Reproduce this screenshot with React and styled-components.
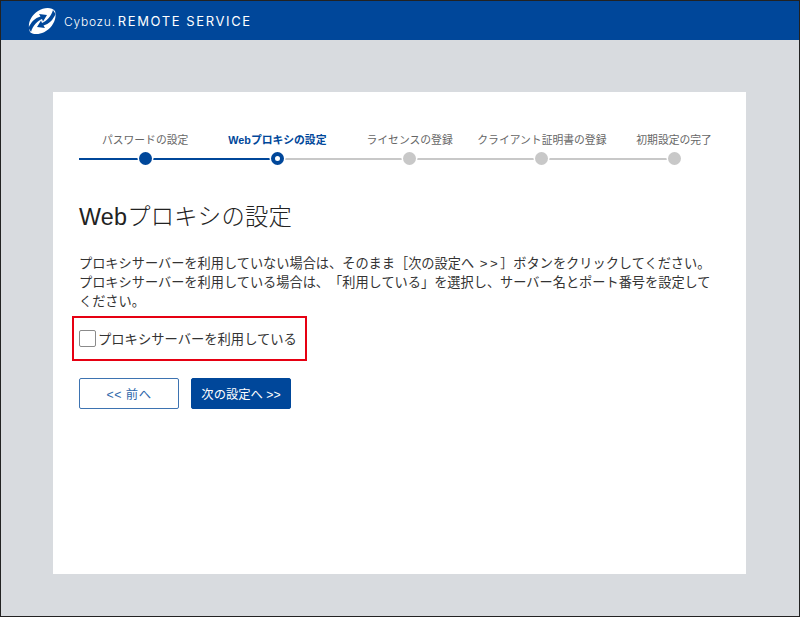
import styled, { createGlobalStyle } from 'styled-components'

const GlobalStyle = createGlobalStyle`
    html, body {
        margin: 0;
        padding: 0;
    }
    body {
        font-family: "Liberation Sans", "Noto Sans CJK JP", sans-serif;
        color: #333;
        text-spacing-trim: space-all;
    }
    * {
        box-sizing: border-box;
    }
`

const Page = styled.div`
    width: 800px;
    height: 617px;
    background-color: #d8dbdf;
    display: flex;
    flex-direction: column;
    overflow: hidden;
    border: 1px solid #222;
`

const Header = styled.header`
    height: 39px;
    flex: none;
    background-color: #00479a;
    display: flex;
    align-items: center;
    padding-left: 26px;
    gap: 7px;
`

const Brand = styled.div`
    display: flex;
    align-items: baseline;
    color: #fff;
    white-space: nowrap;
    font-family: "Inter", sans-serif;
`

const BrandName = styled.span`
    font-size: 12px;
    font-weight: 300;
    letter-spacing: 0.75px;
`

const BrandProduct = styled.span`
    font-size: 13px;
    font-weight: 400;
    letter-spacing: 1.6px;
    margin-left: 2px;
`

const Card = styled.main`
    width: 693px;
    height: 482px;
    margin: 52px 0 0 52px;
    background-color: #fff;
    padding: 40px 26px 0;
`

const Stepper = styled.ol`
    display: flex;
    list-style: none;
    margin: 0;
    padding: 0;
`

const Step = styled.li`
    width: 132.25px;
    display: flex;
    flex-direction: column;
    align-items: center;
    position: relative;
    flex: none;
    &::before,
    &::after {
        content: '';
        position: absolute;
        bottom: 5px;
        height: 2px;
        width: 50%;
    }
    &::before {
        left: 0;
        background-color: ${(p) => (p.$leftDone ? '#00479a' : '#c8c8c8')};
    }
    &::after {
        right: 0;
        background-color: ${(p) => (p.$last ? 'transparent' : p.$rightDone ? '#00479a' : '#c8c8c8')};
    }
`

const StepLabel = styled.span`
    font-size: 10.8px;
    line-height: 16px;
    white-space: nowrap;
    margin-bottom: 4px;
    color: ${(p) => (p.$current ? '#00479a' : '#666')};
    font-weight: ${(p) => (p.$current ? 700 : 400)};
`

const StepDot = styled.span`
    width: 13px;
    height: 13px;
    border-radius: 50%;
    position: relative;
    z-index: 1;
    background-color: ${(p) => (p.$current ? '#fff' : p.$done ? '#00479a' : '#c8c8c8')};
    border: ${(p) => (p.$current ? '4px solid #00479a' : 'none')};
    box-shadow: 0 0 0 1.5px #fff;
`

const Title = styled.h1`
    font-size: 23.3px;
    font-weight: 300;
    line-height: 28px;
    letter-spacing: 0.25px;
    margin: 38px 0 0;
    color: #222;
`

const Description = styled.p`
    font-size: 13.2px;
    line-height: 19px;
    word-spacing: 2px;
    margin: 23px 0 0;
    color: #333;
`

const Chevrons = styled.span`
    letter-spacing: 2.5px;
`

const OptionBox = styled.div`
    width: 235px;
    height: 45px;
    margin: 5px 0 0 -7px;
    border: 2px solid #e60012;
    display: flex;
    align-items: center;
    padding-left: 5px;
`

const OptionLabel = styled.label`
    display: flex;
    align-items: center;
    gap: 2px;
    font-size: 13.3px;
    white-space: nowrap;
    color: #333;
`

const CheckBox = styled.span`
    width: 17px;
    height: 17px;
    border: 1px solid #8a8a8a;
    border-radius: 2px;
    background-color: #fff;
`

const Actions = styled.div`
    display: flex;
    gap: 12px;
    margin-top: 17px;
`

const Button = styled.button`
    width: 100px;
    height: 31px;
    padding: 0;
    border-radius: 2px;
    border: 1px solid ${(p) => (p.$primary ? '#00479a' : '#3d73b1')};
    background-color: ${(p) => (p.$primary ? '#00479a' : '#fff')};
    color: ${(p) => (p.$primary ? '#fff' : '#2e67aa')};
    font-family: inherit;
    font-size: 12.3px;
    letter-spacing: ${(p) => (p.$primary ? '0' : '0.5px')};
`

const steps = [
    { label: 'パスワードの設定', done: true, leftDone: true, rightDone: true },
    { label: 'Webプロキシの設定', current: true, leftDone: true },
    { label: 'ライセンスの登録' },
    { label: 'クライアント証明書の登録' },
    { label: '初期設定の完了', last: true },
]

const Logo = () => (
    <svg width="30" height="26" viewBox="0 0 30 26" aria-hidden="true">
        <path d="M3 24 C0 17 3 8 11 3 C17 -1 25 -1 28 3 C30 9 27 18 19 23 C13 27 6 27 3 24 Z" fill="#fff" />
        <path d="M1.5 20 C4 14 8 10 13.5 8.5 L12 6 L20 7 L16 13.5 L15 11 C11 12.5 6 17 4 24 Z" fill="#00479a" />
        <path d="M28.5 6 C26 12 22 16 16.5 17.5 L18 20 L10 19 L14 12.5 L15 15 C19 13.5 24 9 26 2 Z" fill="#00479a" />
    </svg>
)

export default function App() {
    return (
        <>
            <GlobalStyle />
            <Page>
                <Header>
                    <Logo />
                    <Brand>
                        <BrandName>Cybozu.</BrandName>
                        <BrandProduct>REMOTE SERVICE</BrandProduct>
                    </Brand>
                </Header>
                <Card>
                    <Stepper>
                        {steps.map((s) => (
                            <Step key={s.label} $leftDone={s.leftDone} $rightDone={s.rightDone} $last={s.last}>
                                <StepLabel $current={s.current}>{s.label}</StepLabel>
                                <StepDot $done={s.done} $current={s.current} />
                            </Step>
                        ))}
                    </Stepper>
                    <Title>Webプロキシの設定</Title>
                    <Description>
                        プロキシサーバーを利用していない場合は、そのまま［次の設定へ <Chevrons>&gt;&gt;</Chevrons>］ボタンをクリックしてください。
                        <br />
                        プロキシサーバーを利用している場合は、「利用している」を選択し、サーバー名とポート番号を設定してください。
                    </Description>
                    <OptionBox>
                        <OptionLabel>
                            <CheckBox />
                            プロキシサーバーを利用している
                        </OptionLabel>
                    </OptionBox>
                    <Actions>
                        <Button type="button">&lt;&lt; 前へ</Button>
                        <Button type="button" $primary>次の設定へ &gt;&gt;</Button>
                    </Actions>
                </Card>
            </Page>
        </>
    )
}
